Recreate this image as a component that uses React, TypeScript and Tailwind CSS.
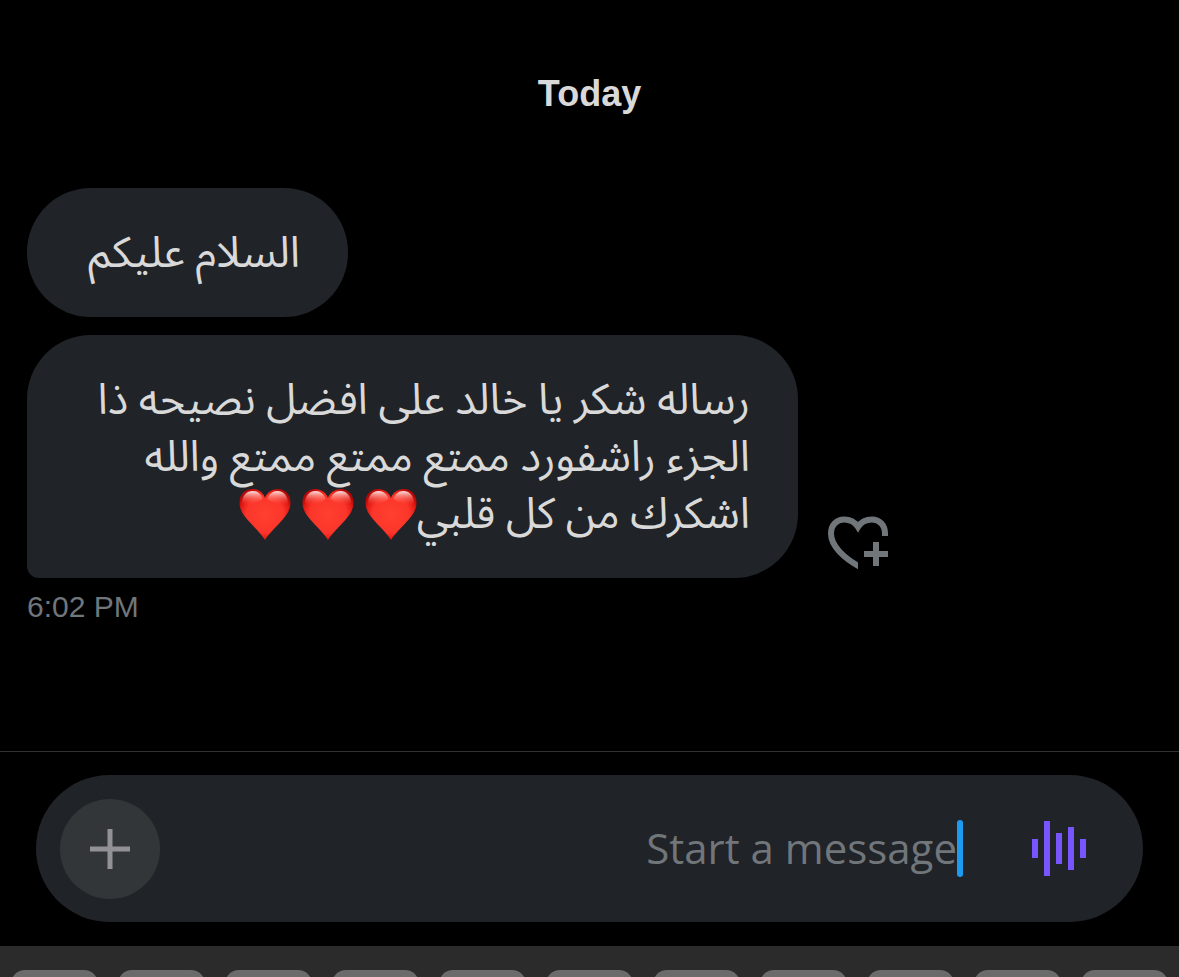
interface MessageProps {
  lines: string[];
  hearts?: number;
  last?: boolean;
}

const messages: MessageProps[] = [
  { lines: ['السلام عليكم'] },
  {
    lines: [
      'رساله شكر يا خالد على افضل نصيحه ذا',
      'الجزء راشفورد ممتع ممتع ممتع والله',
      'اشكرك من كل قلبي',
    ],
    hearts: 3,
    last: true,
  },
];

const KEY_COUNT = 11;

function HeartDefs() {
  return (
    <svg width="0" height="0" className="absolute" aria-hidden="true">
      <defs>
        <radialGradient id="heart-fill" cx="50%" cy="50%" r="56%">
          <stop offset="0" stopColor="#ff4030" />
          <stop offset="0.65" stopColor="#fb352a" />
          <stop offset="0.85" stopColor="#e51c16" />
          <stop offset="1" stopColor="#b80808" />
        </radialGradient>
        <linearGradient id="heart-shine" x1="0" y1="0" x2="0" y2="1">
          <stop offset="0" stopColor="#fff0ee" stopOpacity="0.95" />
          <stop offset="0.35" stopColor="#ffb0a8" stopOpacity="0.65" />
          <stop offset="1" stopColor="#ff5040" stopOpacity="0" />
        </linearGradient>
      </defs>
    </svg>
  );
}

function RedHeart() {
  return (
    <svg viewBox="0 0 52 52" className="h-[52px] w-[52px]" role="img" aria-label="❤️">
      <path
        d="M26 52C23 47 17 41 11 34.500C4.500 27.500 0.500 22 0.500 14.500C0.500 6.500 6 1 13.200 1C19.500 1 24 4.500 26 10C28 4.500 32.500 1 38.800 1C46 1 51.500 6.500 51.500 14.500C51.500 22 47.500 27.500 41 34.500C35 41 29 47 26 52Z"
        fill="url(#heart-fill)"
      />
      <path d="M3 15C3 7.500 8 3 13.500 3C18.500 3 22 6 23.500 11C19 15 9 19 3 15Z" fill="url(#heart-shine)" />
      <path d="M49 15C49 7.500 44 3 38.500 3C33.500 3 30 6 28.500 11C33 15 43 19 49 15Z" fill="url(#heart-shine)" />
    </svg>
  );
}

function AddReactionIcon() {
  return (
    <svg viewBox="0 0 60 54" className="h-[54px] w-[60px]" fill="none" stroke="#71767b" strokeWidth="6" aria-hidden="true">
      <clipPath id="reaction-clip">
        <path d="M0 0H60V20H30V54H0Z" />
      </clipPath>
      <path
        d="M34 52C15 42 3 29.500 3 17.500C3 9 8.500 3.500 16 3.500C22 3.500 27 6 30 11C33 6 38 3.500 44 3.500C51.500 3.500 57 9 57 17.500V20"
        clipPath="url(#reaction-clip)"
      />
      <path d="M36 38H60M48 26V50" />
    </svg>
  );
}

function Message({ lines, hearts = 0, last }: MessageProps) {
  return (
    <div className="flex items-end gap-[30px]">
      <div
        dir="rtl"
        className={`bg-[#202327] px-12 py-9 font-['Roboto','Noto_Sans_Arabic',sans-serif] text-[43px] leading-[57px] whitespace-nowrap text-[#d9d9d9] ${
          last ? 'min-w-[771px] rounded-[64px] rounded-bl-[12px]' : 'min-w-[321px] rounded-[64px]'
        }`}
      >
        {lines.map((line, i) => (
          <p key={line} className="flex items-center">
            {line}
            {i === lines.length - 1 && hearts > 0 && (
              <span className="flex gap-[11px]">
                {Array.from({ length: hearts }, (_, n) => (
                  <RedHeart key={n} />
                ))}
              </span>
            )}
          </p>
        ))}
      </div>
      {last && (
        <button aria-label="Add reaction" className="mb-2">
          <AddReactionIcon />
        </button>
      )}
    </div>
  );
}

function Composer() {
  return (
    <form className="border-t border-[#2f3133] px-9 pt-[23px] pb-6">
      <div className="flex h-[147px] items-center rounded-full bg-[#202327] pr-[57px] pl-6">
        <button
          type="button"
          aria-label="Add attachment"
          className="flex h-[100px] w-[100px] shrink-0 items-center justify-center rounded-full bg-[#333639]"
        >
          <svg viewBox="0 0 40 40" className="h-10 w-10" stroke="#929196" strokeWidth="5" aria-hidden="true">
            <path d="M0 20H40M20 0V40" />
          </svg>
        </button>
        <input
          type="text"
          aria-label="Start a message"
          placeholder="Start a message"
          className="h-[57px] min-w-0 flex-1 bg-transparent pb-0.5 text-right text-[42px] text-[#d9d9d9] outline-none placeholder:text-[#71767b]"
        />
        <span className="h-[57px] w-1.5 rounded-full bg-[#1d9bf0]" />
        <button type="button" aria-label="Record voice message" className="ml-[69px] shrink-0">
          <svg viewBox="0 0 54 55" className="h-[55px] w-[54px]" fill="#7856ff" aria-hidden="true">
            <path d="M0 18h6v19H0zM12 0h6v55h-6zM24 12h6v31h-6zM36 6h6v43h-6zM48 18h6v19h-6z" />
          </svg>
        </button>
      </div>
    </form>
  );
}

function Keyboard() {
  return (
    <div className="grid h-[31px] grid-cols-11 gap-5 overflow-hidden bg-[#2b2b2b] px-[11px] pt-6">
      {Array.from({ length: KEY_COUNT }, (_, i) => (
        <div key={i} className="h-32 rounded-[14px] bg-[#6b6b6b]" />
      ))}
    </div>
  );
}

export default function App() {
  return (
    <div className="flex min-h-screen flex-col bg-black font-['Open_Sans',sans-serif]">
      <HeartDefs />
      <main className="flex-1 px-[27px]">
        <h2 className="pt-[70px] text-center font-['Liberation_Sans',sans-serif] text-[36px] leading-[48px] font-bold text-[#d9d9d9]">
          Today
        </h2>
        <div className="mt-[70px] flex flex-col gap-[18px]">
          {messages.map((message) => (
            <Message key={message.lines[0]} {...message} />
          ))}
        </div>
        <time className="mt-2 block font-['Liberation_Sans',sans-serif] text-[30px] leading-[42px] text-[#71767b]">
          6:02 PM
        </time>
      </main>
      <Composer />
      <Keyboard />
    </div>
  );
}
